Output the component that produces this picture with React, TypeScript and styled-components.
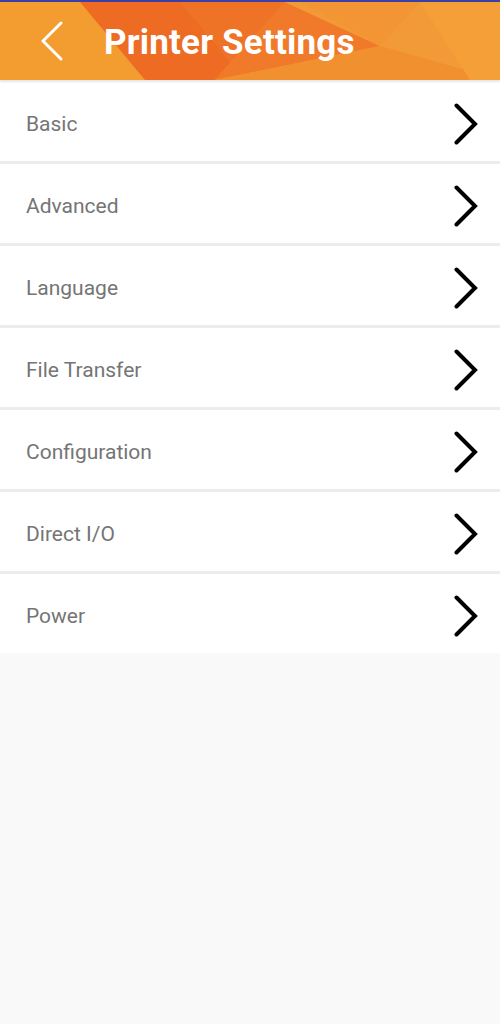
import styled, { createGlobalStyle } from 'styled-components'

const GlobalStyle = createGlobalStyle`
  html, body {
    margin: 0;
    padding: 0;
    background: #f9f9f9;
    font-family: Roboto, 'Noto Sans', sans-serif;
  }
`

const Page = styled.div`
  width: 500px;
  min-height: 1024px;
  background: #f9f9f9;
`

const Header = styled.header`
  position: relative;
  height: 78px;
  border-top: 2px solid #3b3fa6;
  display: flex;
  align-items: center;
  overflow: hidden;
  background: #f29232;
  box-shadow: 0 2px 2px rgba(0, 0, 0, 0.08);
  z-index: 1;
`

const Pattern = styled.svg`
  position: absolute;
  inset: 0;
  width: 100%;
  height: 100%;
`

const BackButton = styled.button`
  position: relative;
  border: none;
  background: none;
  padding: 0;
  margin: 0 0 0 40px;
  width: 24px;
  height: 40px;
  display: flex;
  align-items: center;
  cursor: pointer;
`

const Title = styled.h1`
  position: relative;
  margin: 2px 0 0 40px;
  font-size: 35px;
  font-weight: 700;
  color: #ffffff;
  letter-spacing: 0.2px;
`

const List = styled.ul`
  list-style: none;
  margin: 0;
  padding: 2px 0 0;
`

const Row = styled.li`
  height: 79px;
  box-sizing: border-box;
  padding: 4px 22px 0 26px;
  background: #ffffff;
  display: flex;
  align-items: center;
  justify-content: space-between;
  & + & {
    border-top: 3px solid #ececec;
    height: 82px;
  }
`

const Label = styled.span`
  font-size: 21px;
  color: #757575;
`

const Chevron = styled.svg`
  width: 24px;
  height: 42px;
`

const items = [
  'Basic',
  'Advanced',
  'Language',
  'File Transfer',
  'Configuration',
  'Direct I/O',
  'Power',
]

function App() {
  return (
    <Page>
      <GlobalStyle />
      <Header>
        <Pattern viewBox="0 0 500 78" preserveAspectRatio="none">
          <defs>
            <linearGradient id="left" x1="0" x2="1" y1="0" y2="0">
              <stop offset="0" stopColor="#f4a52f" />
              <stop offset="1" stopColor="#f18f30" />
            </linearGradient>
          </defs>
          <rect x="0" y="0" width="500" height="78" fill="url(#left)" />
          <polygon points="0,0 80,0 150,78 0,78" fill="#f39c30" />
          <polygon points="80,0 285,0 215,78 145,78" fill="#ee6b24" />
          <polygon points="180,0 285,0 230,60" fill="#ef7326" />
          <polygon points="285,0 380,44 215,78" fill="#f07a2a" />
          <polygon points="285,0 500,0 500,78 380,44" fill="#f29a37" />
          <polygon points="380,44 500,78 215,78" fill="#f1902f" />
          <polygon points="420,0 500,0 500,78 470,78" fill="#f49f38" />
          <polygon points="300,0 420,0 380,44" fill="#f39534" />
        </Pattern>
        <BackButton aria-label="Back">
          <svg width="24" height="40" viewBox="0 0 24 40">
            <polyline
              points="21,2 3,20 21,38"
              fill="none"
              stroke="#ffffff"
              strokeWidth="3"
              strokeLinecap="round"
              strokeLinejoin="round"
            />
          </svg>
        </BackButton>
        <Title>Printer Settings</Title>
      </Header>
      <List>
        {items.map((item) => (
          <Row key={item}>
            <Label>{item}</Label>
            <Chevron viewBox="0 0 24 42">
              <polyline
                points="2.5,2.5 21,21 2.5,39.5"
                fill="none"
                stroke="#000000"
                strokeWidth="4"
                strokeLinecap="round"
                strokeLinejoin="miter"
              />
            </Chevron>
          </Row>
        ))}
      </List>
    </Page>
  )
}

export default App
